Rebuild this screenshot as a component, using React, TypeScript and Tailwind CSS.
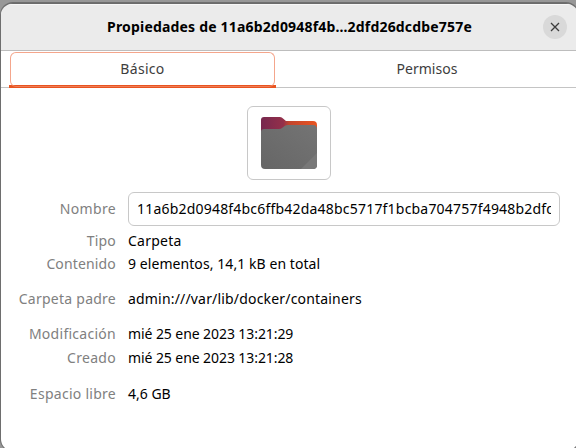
type Row = { label: string; value: string; gap: string; labelTrack: string; valueTrack: string };

const rows: Row[] = [
  { label: 'Tipo', value: 'Carpeta', gap: 'mt-[5px]', labelTrack: 'tracking-[0.2px]', valueTrack: 'tracking-[0.25px]' },
  { label: 'Contenido', value: '9 elementos, 14,1 kB en total', gap: 'mt-[3px]', labelTrack: 'tracking-[0.15px]', valueTrack: 'tracking-[0.07px]' },
  { label: 'Carpeta padre', value: 'admin:///var/lib/docker/containers', gap: 'mt-[15px]', labelTrack: 'tracking-[0.25px]', valueTrack: 'tracking-[0.18px]' },
  { label: 'Modificación', value: 'mié 25 ene 2023 13:21:29', gap: 'mt-[15px]', labelTrack: 'tracking-[0.27px]', valueTrack: 'tracking-[-0.08px]' },
  { label: 'Creado', value: 'mié 25 ene 2023 13:21:28', gap: 'mt-[4px]', labelTrack: 'tracking-[0.3px]', valueTrack: 'tracking-[-0.08px]' },
  { label: 'Espacio libre', value: '4,6 GB', gap: 'mt-[16px]', labelTrack: 'tracking-[0.27px]', valueTrack: 'tracking-[0px]' },
];

function FolderIcon() {
  return (
    <svg width="58" height="54" viewBox="0 0 58 54">
      <defs>
        <linearGradient id="back" x1="0" x2="1">
          <stop offset="0" stopColor="#77284f" />
          <stop offset="0.4" stopColor="#94304a" />
          <stop offset="0.5" stopColor="#c2452e" />
          <stop offset="1" stopColor="#e95420" />
        </linearGradient>
        <linearGradient id="front" x1="0" y1="1" x2="1" y2="0">
          <stop offset="0" stopColor="#666666" />
          <stop offset="1" stopColor="#747474" />
        </linearGradient>
      </defs>
      <path d="M1 16V4Q1 1 4 1H20Q22 1 23 2.5L26 5H53Q57 5 57 9V16Z" fill="url(#back)" />
      <path d="M1 16Q1 13 4 13H19Q21 13 22 12L25 9.7Q26 9 28 9H53Q57 9 57 13V49Q57 53 53 53H5Q1 53 1 49Z" fill="url(#front)" />
      <path d="M57 37V49Q57 53 53 53H41Z" fill="#787878" />
    </svg>
  );
}

export default function App() {
  return (
    <div className="h-[448px] w-[576px] overflow-hidden bg-[#979797] pl-px pt-[3px] font-['Noto_Sans','Open_Sans',sans-serif] text-[14px] leading-5 text-black">
      <div className="flex h-[448px] w-[577px] flex-col overflow-hidden rounded-[12px] border-t border-[#6b6b6b] bg-white shadow-[0_0_0_1px_#6e6e6e]">
        <header className="flex h-[47px] shrink-0 items-center border-b border-[#bdbdbd] bg-[#ebebeb] pl-[35px] pr-[11px] shadow-[inset_0_1px_0_#f7f7f7]">
          <h1 className="flex-1 whitespace-nowrap text-center font-bold">
            <span className="tracking-[0.18px]">Propiedades de 11a6b2d0948f4b…2dfd26dcdbe757e</span>
          </h1>
          <button className="flex size-6 items-center justify-center rounded-full bg-[#d9d9d9]" aria-label="Cerrar">
            <svg width="10" height="10" viewBox="0 0 10 10" stroke="#3d3d3d" strokeWidth="1.3">
              <path d="M1 1L9 9M9 1L1 9" />
            </svg>
          </button>
        </header>
        <nav className="flex h-[37px] shrink-0 border-b border-[#c4c4c4] pl-2 text-[#3d3d3d]">
          <div className="h-[37px] w-[267px] border-b-[3px] border-[#e95420] px-px pt-px">
            <div className="flex h-[35px] items-center justify-center rounded-[6px] border border-[#f4a68c] border-b-[#ef7d56] pb-px">
              <span className="tracking-[0.3px]">Básico</span>
            </div>
          </div>
          <div className="flex h-9 flex-1 items-center justify-center">
            <span className="tracking-[0.05px]">Permisos</span>
          </div>
        </nav>
        <main className="flex flex-col pt-[18px]">
          <div className="ml-[246px] flex h-[74px] w-[84px] items-center justify-center rounded-[6px] border border-[#c8c8c8]">
            <FolderIcon />
          </div>
          <div className="mt-3 flex items-center">
            <label className="w-[115px] text-right text-[#808080]"><span className="tracking-[0.35px]">Nombre</span></label>
            <div className="ml-3 h-[34px] w-[432px] rounded-[6px] border border-[#c8c8c8] px-2 py-1.5">
              <div className="overflow-hidden whitespace-nowrap tracking-[0.2px]">11a6b2d0948f4bc6ffb42da48bc5717f1bcba704757f4948b2dfd26dcdbe757e</div>
            </div>
          </div>
          {rows.map((r) => (
            <div key={r.label} className={`flex whitespace-nowrap ${r.gap}`}>
              <div className="w-[115px] text-right text-[#808080]"><span className={r.labelTrack}>{r.label}</span></div>
              <div className="ml-3"><span className={r.valueTrack}>{r.value}</span></div>
            </div>
          ))}
        </main>
      </div>
    </div>
  );
}
